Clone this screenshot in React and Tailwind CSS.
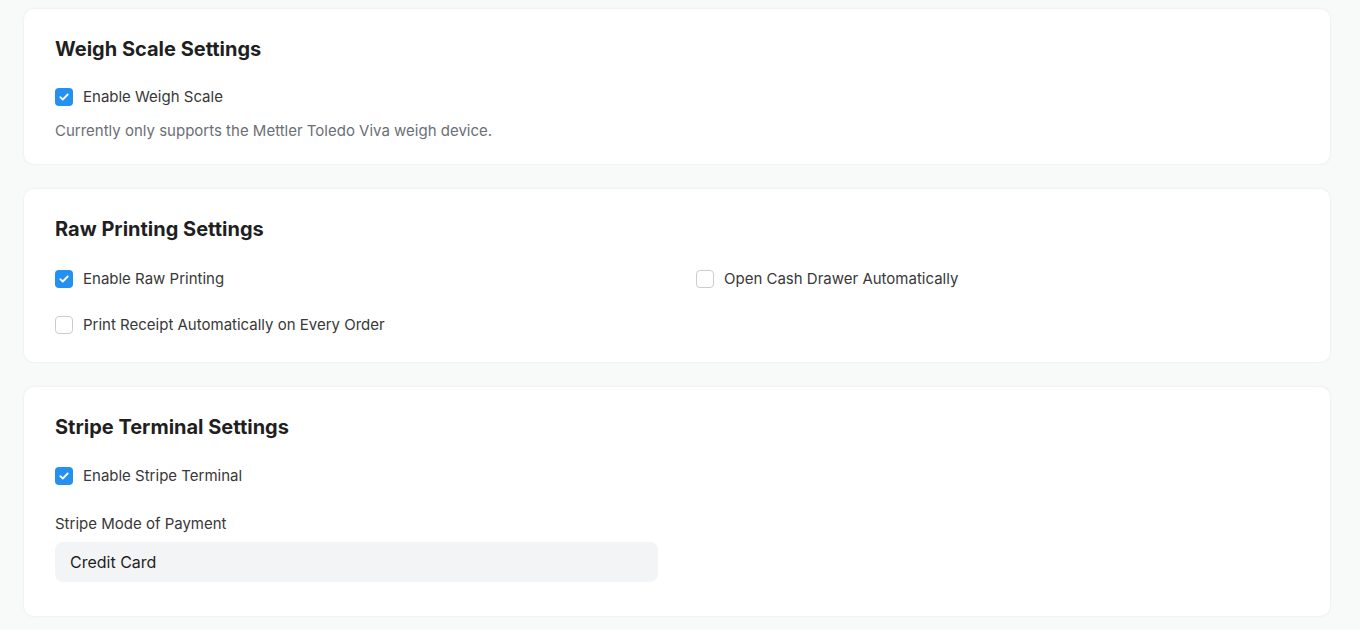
import React, { useState } from "react";

const Check = ({ checked, onChange, label }) => (
  <label className="flex items-center gap-[10px] cursor-pointer select-none">
    <span
      onClick={onChange}
      className={
        checked
          ? "w-[18px] h-[18px] rounded-[4px] bg-[#2490ef] flex items-center justify-center"
          : "w-[18px] h-[18px] rounded-[4px] bg-white border border-[#c9ccd1]"
      }
    >
      {checked && (
        <svg width="10" height="8" viewBox="0 0 10 8" fill="none">
          <path d="M1.3 4.2 3.8 6.5 8.7 1.5" stroke="white" strokeWidth="1.8" strokeLinecap="round" strokeLinejoin="round" />
        </svg>
      )}
    </span>
    <span className="text-[15px] leading-[20px] text-[#383838]">{label}</span>
  </label>
);

const Card = ({ title, children }) => (
  <div className="bg-white rounded-[10px] shadow-[0_0_3px_rgba(0,0,0,0.08)] px-[31px] pt-[27px]">
    <h2 className="text-[20px] font-bold text-[#1f1f1f] leading-[26px]">{title}</h2>
    {children}
  </div>
);

export default function App() {
  const [s, setS] = useState({
    weigh: true,
    raw: true,
    drawer: false,
    receipt: false,
    stripe: true,
  });
  const toggle = (k) => setS({ ...s, [k]: !s[k] });

  return (
    <div
      className="min-h-[630px] bg-[#f8f9f9] pl-[24px] pr-[30px] pt-[9px] flex flex-col gap-[25px]"
      style={{ fontFamily: "Inter, 'Noto Sans', sans-serif" }}
    >
      {/* weigh scale */}
      <Card title="Weigh Scale Settings">
        <div className="mt-[25px]">
          <Check checked={s.weigh} onChange={() => toggle("weigh")} label="Enable Weigh Scale" />
        </div>
        <p className="mt-[14px] pb-[23px] text-[15px] text-[#6b6f76] leading-[20px]">
          Currently only supports the Mettler Toledo Viva weigh device.
        </p>
      </Card>

      {/* raw printing */}
      <Card title="Raw Printing Settings">
        <div className="mt-[27px] pb-[27px] grid grid-cols-2 gap-x-[38px] gap-y-[26px]">
          <Check checked={s.raw} onChange={() => toggle("raw")} label="Enable Raw Printing" />
          <Check checked={s.drawer} onChange={() => toggle("drawer")} label="Open Cash Drawer Automatically" />
          <Check checked={s.receipt} onChange={() => toggle("receipt")} label="Print Receipt Automatically on Every Order" />
        </div>
      </Card>

      {/* stripe */}
      <Card title="Stripe Terminal Settings">
        <div className="mt-[26px]">
          <Check checked={s.stripe} onChange={() => toggle("stripe")} label="Enable Stripe Terminal" />
        </div>
        <div className="grid grid-cols-2 gap-x-[38px] mt-[28px] pb-[34px]">
          <div>
            <div className="text-[15px] text-[#383838] leading-[20px]">Stripe Mode of Payment</div>
            <div className="mt-[8px] h-[40px] rounded-[8px] bg-[#f3f4f6] px-[15px] flex items-center text-[16px] text-[#1f1f1f]">
              Credit Card
            </div>
          </div>
        </div>
      </Card>
    </div>
  );
}
